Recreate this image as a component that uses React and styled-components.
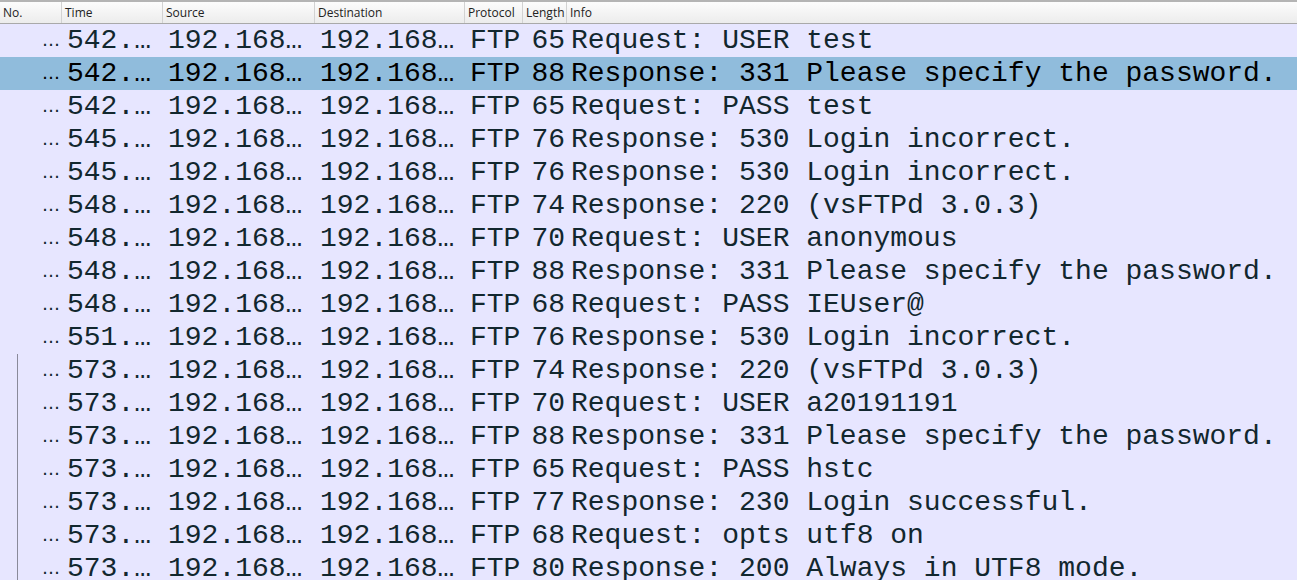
import React from 'react';
import styled, { createGlobalStyle } from 'styled-components';

const GlobalStyle = createGlobalStyle`
  html, body {
    margin: 0;
    padding: 0;
    background: #e7e6ff;
    overflow: hidden;
  }
`;

const COLS = '62px 101px 152px 150px 58px 44px 1fr';

const PacketList = styled.div`
  width: 1297px;
  height: 580px;
  overflow: hidden;
  background: #e7e6ff;
  border-top: 2px solid #b4b4b4;
  box-sizing: border-box;
`;

const HeaderRow = styled.div`
  display: grid;
  grid-template-columns: ${COLS};
  height: 21px;
  background: linear-gradient(#fcfcfc, #ececec);
  border-bottom: 1px solid #a9a9a9;
`;

const HeaderCell = styled.div`
  display: flex;
  align-items: center;
  padding-left: 3px;
  border-right: 1px solid #d2d2d2;
  font-family: 'Open Sans', 'Noto Sans', sans-serif;
  font-size: 12px;
  color: #222;
  white-space: nowrap;
  overflow: hidden;

  &:last-child {
    border-right: none;
  }
`;

const Row = styled.div`
  display: grid;
  grid-template-columns: ${COLS};
  height: 33px;
  align-items: center;
  background: ${(p) => (p.$selected ? '#90bcdc' : '#e7e6ff')};
  color: ${(p) => (p.$selected ? '#000' : '#12272e')};
  font-family: 'Liberation Mono', 'Cousine', monospace;
  font-size: 28px;
`;

const Cell = styled.div`
  position: relative;
  height: 100%;
  display: flex;
  align-items: center;
  justify-content: ${(p) => (p.$right ? 'flex-end' : 'flex-start')};
  padding: ${(p) => p.$pad || '0 0 0 5px'};
  white-space: nowrap;
  overflow: hidden;
`;

const NoCell = styled(Cell)`
  &::before {
    content: '';
    display: ${(p) => (p.$related ? 'block' : 'none')};
    position: absolute;
    left: 17px;
    top: 0;
    bottom: 0;
    width: 1px;
    background: #8a8a9a;
  }
`;

const Ellip = styled.span`
  font-family: 'DejaVu Sans', sans-serif;
  font-size: 18px;
  align-self: flex-end;
  margin-bottom: 7px;
`;

const packets = [
  ['542', 65, 'Request: USER test'],
  ['542', 88, 'Response: 331 Please specify the password.', true],
  ['542', 65, 'Request: PASS test'],
  ['545', 76, 'Response: 530 Login incorrect.'],
  ['545', 76, 'Response: 530 Login incorrect.'],
  ['548', 74, 'Response: 220 (vsFTPd 3.0.3)'],
  ['548', 70, 'Request: USER anonymous'],
  ['548', 88, 'Response: 331 Please specify the password.'],
  ['548', 68, 'Request: PASS IEUser@'],
  ['551', 76, 'Response: 530 Login incorrect.'],
  ['573', 74, 'Response: 220 (vsFTPd 3.0.3)', false, true],
  ['573', 70, 'Request: USER a20191191', false, true],
  ['573', 88, 'Response: 331 Please specify the password.', false, true],
  ['573', 65, 'Request: PASS hstc', false, true],
  ['573', 77, 'Response: 230 Login successful.', false, true],
  ['573', 68, 'Request: opts utf8 on', false, true],
  ['573', 80, 'Response: 200 Always in UTF8 mode.', false, true],
];

const headers = ['No.', 'Time', 'Source', 'Destination', 'Protocol', 'Length', 'Info'];

export default function App() {
  return (
    <>
      <GlobalStyle />
      <PacketList>
        <HeaderRow>
          {headers.map((h) => (
            <HeaderCell key={h}>{h}</HeaderCell>
          ))}
        </HeaderRow>
        {packets.map(([time, len, info, selected, related], i) => (
          <Row key={i} $selected={selected}>
            <NoCell $right $related={related} $pad="0 2px 0 0">
              <Ellip>…</Ellip>
            </NoCell>
            <Cell>{time}.…</Cell>
            <Cell>192.168…</Cell>
            <Cell>192.168…</Cell>
            <Cell>FTP</Cell>
            <Cell $right $pad="0 2px 0 0">{len}</Cell>
            <Cell $pad="0 0 0 4px">{info}</Cell>
          </Row>
        ))}
      </PacketList>
    </>
  );
}
